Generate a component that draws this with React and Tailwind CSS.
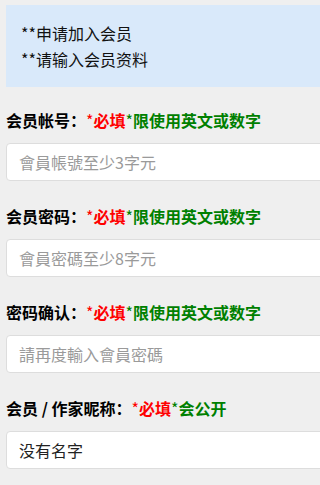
import React from "react";

const font = { fontFamily: '"Noto Sans CJK SC", "Noto Sans CJK TC", "Liberation Sans", sans-serif' };

function Label({ name, extra }) {
  return (
    <div className="text-[16px] leading-[24px] whitespace-nowrap text-black">
      <span className="font-bold">{name}</span>
      <span className="text-[#ff0000]">*</span>
      <span className="font-bold text-[#ff0000]">必填</span>
      <span className="text-[#008000]">*</span>
      <span className="font-bold text-[#008000]">{extra}</span>
    </div>
  );
}

function Field({ name, extra, placeholder, value }) {
  return (
    <div className="flex flex-col gap-[11px]">
      <Label name={name} extra={extra} />
      <div className="w-[600px] h-[38px] bg-white border border-[#dddddd] rounded-[4px] flex items-center pl-[12px] text-[16px] whitespace-nowrap">
        {value ? (
          <span className="text-[#222]">{value}</span>
        ) : (
          <span className="text-[#9a9a9a]">{placeholder}</span>
        )}
      </div>
    </div>
  );
}

export default function App() {
  return (
    <div className="w-full min-h-screen overflow-hidden bg-[#efefef]" style={font}>
      <div className="pl-[6px] pt-[5px] pb-[15px] flex flex-col">
        <div className="w-[600px] bg-[#d9e9fa] py-[15px] pl-[15px] text-[16px] leading-[26px] text-[#111]">
          <div>**申请加入会员</div>
          <div>**请输入会员资料</div>
        </div>
        <div className="mt-[21px] flex flex-col gap-[23px]">
          <Field name="会员帐号：" extra="限使用英文或数字" placeholder="會員帳號至少3字元" />
          <Field name="会员密码：" extra="限使用英文或数字" placeholder="會員密碼至少8字元" />
          <Field name="密码确认：" extra="限使用英文或数字" placeholder="請再度輸入會員密碼" />
          <Field name="会员 / 作家昵称：" extra="会公开" value="没有名字" />
        </div>
      </div>
    </div>
  );
}
